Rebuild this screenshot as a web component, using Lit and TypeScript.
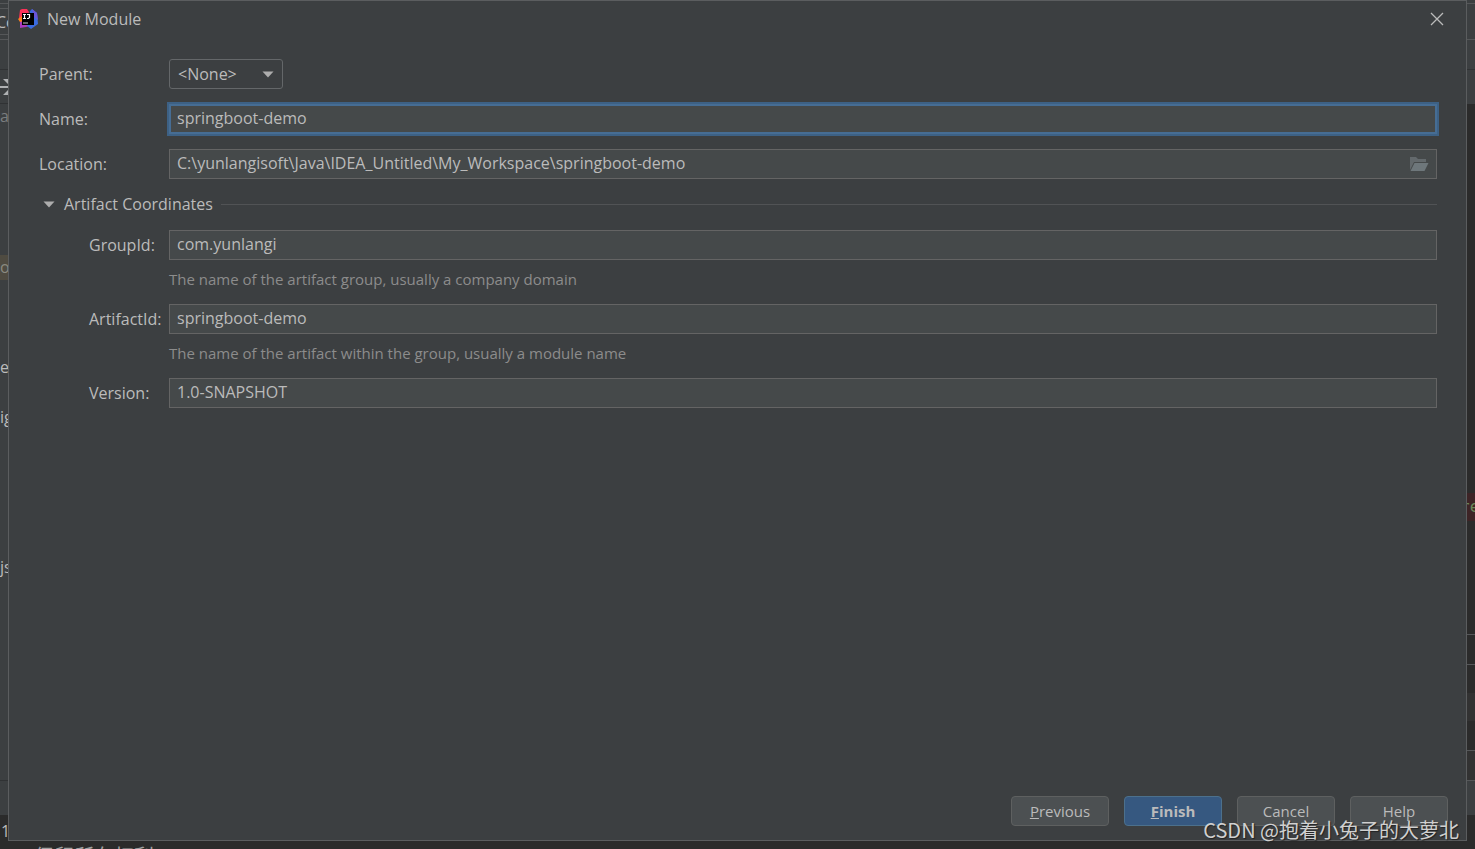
import { LitElement, html, css } from "lit";
import { customElement, state } from "lit/decorators.js";

@customElement("app-root")
export class AppRoot extends LitElement {
  static styles = css`
    :host {
      display: block;
      font-family: "Open Sans", "Noto Sans CJK SC", sans-serif;
      font-size: 16px;
      line-height: 20px;
      color: #bbbbbb;
    }
    * {
      box-sizing: border-box;
    }
    .desktop {
      position: relative;
      display: grid;
      grid-template-columns: 8px minmax(0, 1fr) 8px;
      grid-template-rows: minmax(0, 1fr) 8px;
      height: 100vh;
      background: #2b2b2b;
      overflow: hidden;
    }
    .edge {
      display: flex;
      flex-direction: column;
      overflow: hidden;
      white-space: nowrap;
    }
    .edge > * {
      flex: none;
    }
    .panel {
      background: #3c3f41;
    }
    .h4 { height: 4px; }
    .h5 { height: 5px; }
    .h25 { height: 25px; }
    .h26 { height: 26px; }
    .h28 { height: 28px; }
    .h30 { height: 30px; }
    .h34 { height: 34px; }
    .h36 { height: 36px; }
    .h50 { height: 50px; }
    .line-b { border-bottom: 1px solid #555759; }
    .dark-b { border-bottom: 1px solid #303234; }
    .band { background: #323232; }
    .tab {
      height: 26px;
      line-height: 26px;
      text-indent: -4px;
    }
    .file {
      height: 25px;
      line-height: 25px;
    }
    .dim { color: #7a7d7f; }
    .marked {
      background: #4f4b41;
      color: #8a8a80;
    }
    .edge > .grow { flex: 1 1 0; }
    .term {
      height: 26px;
      line-height: 32px;
      background: #2b2b2b;
      padding-left: 1px;
    }
    .code {
      height: 28px;
      line-height: 28px;
      background: #3d2426;
      color: #6a8759;
      font-family: "DejaVu Sans Mono", monospace;
      text-indent: -7px;
    }
    .console {
      grid-column: 1 / -1;
      padding-left: 34px;
      overflow: hidden;
      font-family: "Noto Sans CJK SC", sans-serif;
      font-size: 20px;
      line-height: 30px;
      color: #a0a0a0;
    }
    .dialog {
      display: flex;
      flex-direction: column;
      background: #3c3f41;
      border: 1px solid #5b5d5f;
    }
    .titlebar {
      display: flex;
      align-items: center;
      gap: 9px;
      height: 36px;
      padding: 0 22px 0 9px;
    }
    .title {
      flex: 1;
      margin: 0;
      font-size: 16px;
      line-height: 20px;
      font-weight: 400;
    }
    .logo,
    .close,
    .close svg,
    .arrow,
    .folder svg,
    .toggle svg {
      display: block;
    }
    button {
      font: inherit;
      color: inherit;
      padding: 0;
      border: 0;
      background: none;
    }
    .form {
      flex: 1;
      display: flex;
      flex-direction: column;
      padding: 22px 29px 0 30px;
    }
    .row {
      display: flex;
      align-items: center;
    }
    .row label {
      flex: none;
      width: 130px;
    }
    .row.nested label {
      width: 80px;
    }
    .nested {
      padding-left: 50px;
    }
    .spaced { margin-top: 15px; }
    .select {
      position: relative;
    }
    select {
      appearance: none;
      display: block;
      width: 114px;
      height: 30px;
      padding: 0 28px 0 8px;
      font: inherit;
      color: inherit;
      background: #3c3f41;
      border: 1px solid #646769;
      border-radius: 3px;
      outline: none;
    }
    .arrow {
      position: absolute;
      right: 9px;
      top: 12px;
      pointer-events: none;
    }
    .field {
      flex: 1;
      display: flex;
      align-items: center;
      min-width: 0;
      height: 30px;
      background: #45494a;
      border: 1px solid #646464;
    }
    .field.active {
      border-color: #466d94;
      box-shadow: 0 0 0 2px #3d6185, inset 0 0 0 1px #466d94;
    }
    input {
      flex: 1;
      min-width: 0;
      height: 28px;
      padding: 0 7px 2px;
      font: inherit;
      color: inherit;
      background: none;
      border: 0;
      outline: none;
    }
    .folder {
      margin-right: 7px;
    }
    .section {
      display: flex;
      align-items: center;
      gap: 8px;
      margin: 15px 0 16px;
    }
    .toggle {
      display: flex;
      align-items: center;
      gap: 9px;
      padding-left: 4px;
    }
    .rule {
      flex: 1;
      height: 1px;
      background: #515355;
    }
    .hint {
      margin: 9px 0 15px 130px;
      font-size: 15px;
      color: #8c8c8c;
    }
    .footer {
      display: flex;
      justify-content: flex-end;
      gap: 15px;
      padding: 0 18px 14px;
    }
    .btn {
      width: 98px;
      height: 30px;
      font-size: 15px;
      background: #4c5052;
      border: 1px solid #5e6060;
      border-radius: 4px;
    }
    .primary {
      background: #365880;
      border-color: #4c708c;
      font-weight: 700;
    }
    .watermark {
      position: absolute;
      right: 16px;
      bottom: 4px;
      font-family: "Noto Sans CJK SC", sans-serif;
      font-size: 20px;
      line-height: 30px;
      color: #d0d0d0;
      text-shadow: 1px 1px 1px #222222;
      pointer-events: none;
    }
  `;

  @state() private expanded = true;

  private logo() {
    return html`<svg class="logo" width="20" height="20" viewBox="0 0 20 20" aria-hidden="true">
      <path d="M2 1 4 0H9L11 3 6 15 1 9Z" fill="#fc3158" />
      <path d="M0 10 4 7 5 14 2 13Z" fill="#fc801d" />
      <path d="M2 13 6 12 12 17 8 18 2 19Z" fill="#a93bbd" />
      <path d="M12 2 14 0 19 4 20 15 13 20 9 17Z" fill="#3b6be0" />
      <path d="M14 0 19 4 20 11 16 8Z" fill="#6a55d8" />
      <path d="M4 4H16V16H4Z" fill="#000" />
      <path d="M5 5.500H8M6.500 5V10M5 9.500H8M9 5.500H12M11.500 5V8.500L10.500 9.500H9" stroke="#fff" stroke-width="1.200" fill="none" />
      <path d="M5 14H10" stroke="#aaa" stroke-width="1.200" />
    </svg>`;
  }

  private triangle(cls = "") {
    return html`<svg class=${cls} width="12" height="7" viewBox="0 0 12 7" aria-hidden="true">
      <path d="M0.500 0.500H11.500L6 6.500Z" fill="#adadad" />
    </svg>`;
  }

  render() {
    return html`
      <div class="desktop">
        <div class="edge panel">
          <div class="h4 line-b"></div>
          <div class="h5 line-b"></div>
          <div class="tab line-b">Co</div>
          <div class="h5 line-b"></div>
          <div class="h30 dark-b"></div>
          <div class="h4"></div>
          <div class="h30 dark-b">
            <svg width="8" height="26" viewBox="0 0 8 26" aria-hidden="true">
              <path d="M0 13H8" stroke="#afb1b3" stroke-width="2" />
              <path d="M3 5H8V10ZM3 21H8V16Z" fill="#afb1b3" />
            </svg>
          </div>
          <div class="file dim">a</div>
          <div class="h50"></div>
          <div class="h50"></div>
          <div class="h26"></div>
          <div class="file marked">o</div>
          <div class="h50"></div>
          <div class="h25"></div>
          <div class="file">e</div>
          <div class="h25"></div>
          <div class="file">ig</div>
          <div class="h50"></div>
          <div class="h50"></div>
          <div class="h25"></div>
          <div class="file">js</div>
          <div class="grow dark-b"></div>
          <div class="h34"></div>
          <div class="term">1</div>
        </div>

        <main class="dialog" role="dialog" aria-labelledby="title">
          <header class="titlebar">
            ${this.logo()}
            <h1 class="title" id="title">New Module</h1>
            <button class="close" aria-label="Close">
              <svg width="14" height="14" viewBox="0 0 14 14"><path d="M1 1 13 13M13 1 1 13" stroke="#bbbbbb" stroke-width="1.300" /></svg>
            </button>
          </header>

          <form class="form" @submit=${(e: Event) => e.preventDefault()}>
            <div class="row">
              <label for="parent">Parent:</label>
              <div class="select">
                <select id="parent"><option>&lt;None&gt;</option></select>
                ${this.triangle("arrow")}
              </div>
            </div>
            <div class="row spaced">
              <label for="name">Name:</label>
              <div class="field active"><input id="name" value="springboot-demo" /></div>
            </div>
            <div class="row spaced">
              <label for="location">Location:</label>
              <div class="field">
                <input id="location" value="C:\\yunlangisoft\\Java\\IDEA_Untitled\\My_Workspace\\springboot-demo" />
                <button class="folder" type="button" aria-label="Browse">
                  <svg width="20" height="16" viewBox="0 0 20 16">
                    <path d="M1 14V1H7L9 3H17V6H5Z" fill="#63696c" />
                    <path d="M5.500 7H19.500L15.500 15H1.500Z" fill="#6e777b" />
                  </svg>
                </button>
              </div>
            </div>
            <div class="section">
              <button class="toggle" type="button" aria-expanded=${this.expanded} @click=${() => (this.expanded = !this.expanded)}>
                ${this.triangle()}<span>Artifact Coordinates</span>
              </button>
              <div class="rule"></div>
            </div>
            ${this.expanded
              ? html`
                  <div class="row nested">
                    <label for="group">GroupId:</label>
                    <div class="field"><input id="group" value="com.yunlangi" /></div>
                  </div>
                  <p class="hint">The name of the artifact group, usually a company domain</p>
                  <div class="row nested">
                    <label for="artifact">ArtifactId:</label>
                    <div class="field"><input id="artifact" value="springboot-demo" /></div>
                  </div>
                  <p class="hint">The name of the artifact within the group, usually a module name</p>
                  <div class="row nested">
                    <label for="version">Version:</label>
                    <div class="field"><input id="version" value="1.0-SNAPSHOT" /></div>
                  </div>
                `
              : ""}
          </form>

          <footer class="footer">
            <button class="btn"><u>P</u>revious</button>
            <button class="btn primary"><u>F</u>inish</button>
            <button class="btn">Cancel</button>
            <button class="btn">Help</button>
          </footer>
        </main>

        <div class="edge">
          <div class="h4 panel line-b"></div>
          <div class="h36 panel line-b"></div>
          <div class="h30 panel dark-b"></div>
          <div class="h34 panel"></div>
          <div class="grow"></div>
          <div class="code">re</div>
          <div class="h50"></div>
          <div class="h36"></div>
          <div class="h28 line-b"></div>
          <div class="h30 line-b"></div>
          <div class="h28"></div>
          <div class="h28 band"></div>
          <div class="h30 line-b"></div>
          <div class="h30 band line-b"></div>
          <div class="h34 panel"></div>
          <div class="h26"></div>
        </div>

        <div class="console">保留所有权利</div>
        <div class="watermark">CSDN @抱着小兔子的大萝北</div>
      </div>
    `;
  }
}
